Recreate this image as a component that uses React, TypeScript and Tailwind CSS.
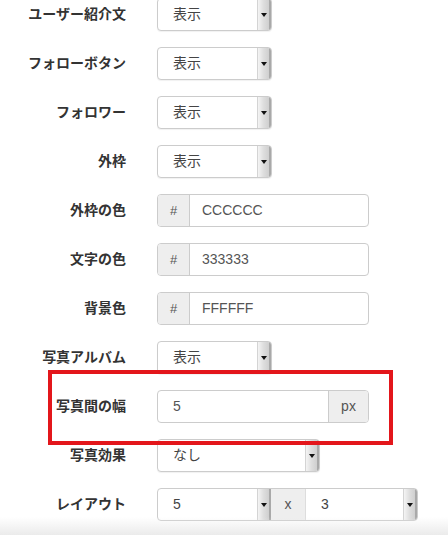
import React from 'react';

const font = { fontFamily: '"Liberation Sans", "Noto Sans CJK JP", sans-serif' };

function Arrow({ className = '' }: { className?: string }) {
    return (
        <span className={`flex w-[14px] shrink-0 items-center justify-center border-l border-[#d4d4d4] border-r-2 border-r-[#a9a9a9] bg-gradient-to-r from-[#f4f4f4] via-[#dedede] to-[#cfcfcf] ${className}`}>
            <span className="h-0 w-0 border-l-[3px] border-r-[3px] border-t-[4px] border-l-transparent border-r-transparent border-t-[#111]" />
        </span>
    );
}

function Select({ value, width }: { value: string; width: string }) {
    return (
        <div className={`flex h-[33px] ${width} overflow-hidden rounded-[4px] border border-[#ccc] bg-white shadow-[0_1px_1px_rgba(0,0,0,0.06)]`}>
            <span className="flex flex-1 items-center pl-[15px] text-[14px] text-[#444]">{value}</span>
            <Arrow />
        </div>
    );
}

function ColorInput({ value }: { value: string }) {
    return (
        <div className="flex h-[33px] w-[212px] overflow-hidden rounded-[4px] border border-[#ccc] bg-white">
            <span className="flex w-[32px] items-center justify-center border-r border-[#ccc] bg-[#eee] text-[13px] text-[#555]">#</span>
            <span className="flex flex-1 items-center pl-[12px] text-[14px] text-[#555]">{value}</span>
        </div>
    );
}

function Row({ label, children }: { label: string; children: React.ReactNode }) {
    return (
        <div className="flex h-[33px] items-center">
            <div className="w-[126px] text-right text-[14px] font-bold text-[#333]">{label}</div>
            <div className="ml-[31px] flex">{children}</div>
        </div>
    );
}

export default function App() {
    return (
        <div className="relative h-[535px] w-[448px] overflow-hidden bg-white" style={font}>
            <div className="mt-[-2px] flex flex-col gap-[16px]">
                <Row label="ユーザー紹介文"><Select value="表示" width="w-[115px]" /></Row>
                <Row label="フォローボタン"><Select value="表示" width="w-[115px]" /></Row>
                <Row label="フォロワー"><Select value="表示" width="w-[115px]" /></Row>
                <Row label="外枠"><Select value="表示" width="w-[115px]" /></Row>
                <Row label="外枠の色"><ColorInput value="CCCCCC" /></Row>
                <Row label="文字の色"><ColorInput value="333333" /></Row>
                <Row label="背景色"><ColorInput value="FFFFFF" /></Row>
                <Row label="写真アルバム"><Select value="表示" width="w-[115px]" /></Row>
                <Row label="写真間の幅">
                    <div className="flex h-[33px] w-[212px] overflow-hidden rounded-[4px] border border-[#ccc] bg-white">
                        <span className="flex flex-1 items-center pl-[15px] text-[14px] text-[#555]">5</span>
                        <span className="flex w-[40px] items-center justify-center border-l border-[#ccc] bg-[#eee] text-[14px] text-[#555]">px</span>
                    </div>
                </Row>
                <Row label="写真効果"><Select value="なし" width="w-[163px]" /></Row>
                <Row label="レイアウト">
                    <div className="flex h-[33px] w-[261px] overflow-hidden rounded-[4px] border border-[#ccc] bg-white">
                        <span className="flex flex-1 items-center pl-[15px] text-[14px] text-[#444]">5</span>
                        <Arrow />
                        <span className="flex w-[34px] items-center justify-center bg-[#eee] text-[14px] text-[#555]">x</span>
                        <span className="flex w-[98px] items-center border-l border-[#ddd] pl-[15px] text-[14px] text-[#444]">3</span>
                        <Arrow />
                    </div>
                </Row>
            </div>

            {/* 赤枠 */}
            <div className="pointer-events-none absolute left-[48px] top-[370px] h-[75px] w-[345px] border-[4px] border-[#e3161b]" />

            {/* 下部の影 */}
            <div className="pointer-events-none absolute bottom-0 left-0 h-[18px] w-full bg-gradient-to-b from-[rgba(235,235,235,0)] to-[#ebebeb]" />
        </div>
    );
}
